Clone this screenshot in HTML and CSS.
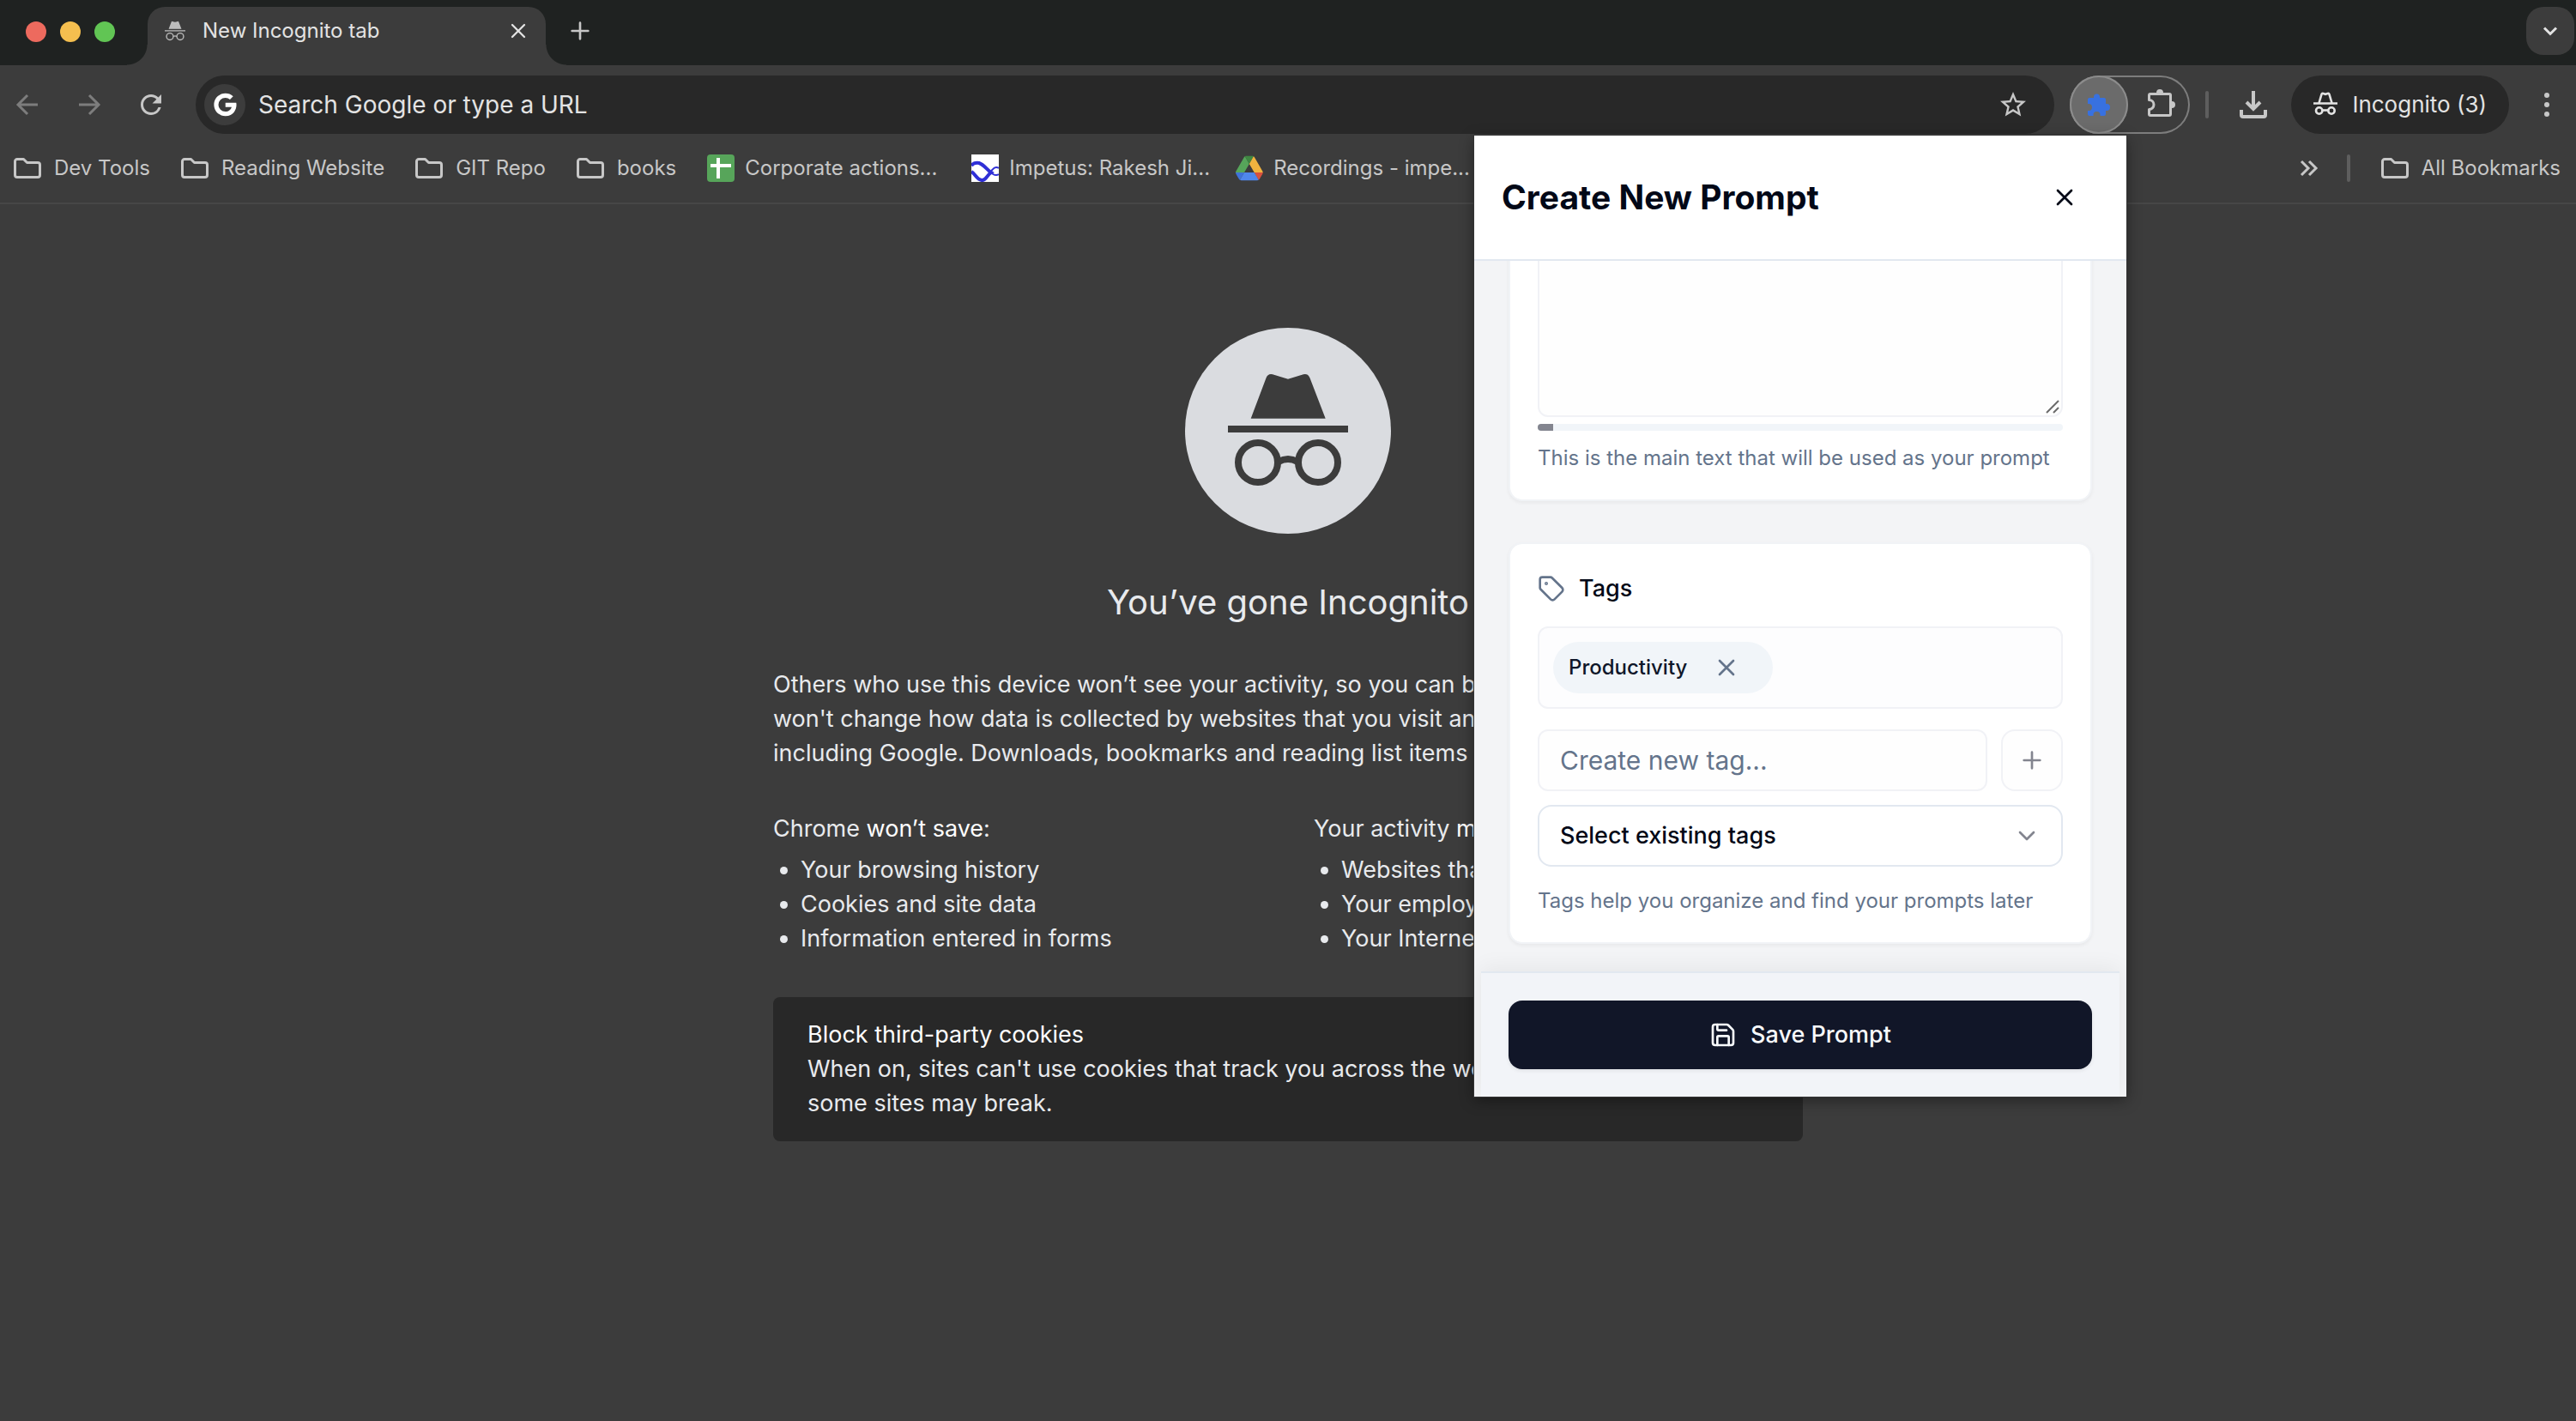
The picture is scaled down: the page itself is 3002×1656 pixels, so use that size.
FILE: index.html
```html
<!DOCTYPE html>
<html lang="en">
<head>
<meta charset="utf-8">
<title>New Incognito tab</title>
<link rel="stylesheet" href="styles.css">
</head>
<body>
<svg class="sprite" aria-hidden="true">
  <symbol id="spy" viewBox="50 49 140 140">
    <path fill="currentColor" d="M76.700 105.700 94.500 58.500Q96.500 53 102 54.200L120 59.700 138 54.200Q143.500 53 145.500 58.500L163.700 105.700ZM50 114H190V122H50Z"/>
    <g fill="none" stroke="currentColor" stroke-width="8"><circle cx="85" cy="157" r="23"/><circle cx="155" cy="157" r="23"/><path d="M109 156Q120 150 131 156"/></g>
  </symbol>
  <symbol id="folder" viewBox="0 0 32 24">
    <path fill="none" stroke="currentColor" stroke-width="3" stroke-linejoin="round" d="M4 1.500H11.500L15.500 5.500H28A2.500 2.500 0 0 1 30.500 8V20A2.500 2.500 0 0 1 28 22.500H4A2.500 2.500 0 0 1 1.500 20V4A2.500 2.500 0 0 1 4 1.500Z"/>
  </symbol>
  <symbol id="cross" viewBox="0 0 24 24">
    <path fill="none" stroke="currentColor" stroke-width="2" stroke-linecap="round" d="M18 6 6 18M6 6l12 12"/>
  </symbol>
  <symbol id="plus" viewBox="0 0 24 24">
    <path fill="none" stroke="currentColor" stroke-width="2" stroke-linecap="round" d="M5 12h14M12 5v14"/>
  </symbol>
  <symbol id="chevron" viewBox="0 0 24 24">
    <path fill="none" stroke="currentColor" stroke-width="2" stroke-linecap="round" stroke-linejoin="round" d="m6 9 6 6 6-6"/>
  </symbol>
</svg>

<header class="browser">
  <div class="tab-strip">
    <div class="lights"><span class="light red"></span><span class="light amber"></span><span class="light green"></span></div>
    <div class="tab">
      <svg class="favicon"><use href="#spy"/></svg>
      <span class="tab-title">New Incognito tab</span>
      <button class="icon-btn tab-close" aria-label="Close tab"><svg class="i28"><use href="#cross"/></svg></button>
    </div>
    <button class="icon-btn new-tab" aria-label="New tab"><svg class="i32"><use href="#plus"/></svg></button>
    <button class="icon-btn tab-search" aria-label="Search tabs"><svg class="i32" viewBox="0 0 32 32"><path fill="none" stroke="currentColor" stroke-width="3" d="m9 12.500 7 7 7-7"/></svg></button>
  </div>

  <div class="toolbar">
    <nav class="nav-btns">
      <button class="icon-btn nav-btn dim" aria-label="Back"><svg class="i32" viewBox="0 0 32 32"><path fill="none" stroke="currentColor" stroke-width="3" d="M28 16H6M16 5 5 16l11 11"/></svg></button>
      <button class="icon-btn nav-btn dim" aria-label="Forward"><svg class="i32" viewBox="0 0 32 32"><path fill="none" stroke="currentColor" stroke-width="3" d="M4 16h22M16 5l11 11-11 11"/></svg></button>
      <button class="icon-btn nav-btn" aria-label="Reload"><svg class="i36" viewBox="0 0 24 24"><path fill="currentColor" d="M17.650 6.350A7.958 7.958 0 0 0 12 4c-4.420 0-7.990 3.580-7.990 8s3.570 8 7.990 8c3.730 0 6.840-2.550 7.730-6h-2.080A5.990 5.990 0 0 1 12 18c-3.310 0-6-2.690-6-6s2.690-6 6-6c1.660 0 3.140.690 4.220 1.780L13 11h7V4l-2.350 2.350z"/></svg></button>
    </nav>
    <div class="omnibox">
      <span class="engine"><svg class="i32" viewBox="0 0 24 24"><path fill="#fff" d="M12.545 10.239v3.821h5.445c-.712 2.315-2.647 3.972-5.445 3.972a6.033 6.033 0 1 1 0-12.064c1.498 0 2.866.549 3.921 1.453l2.814-2.814A9.969 9.969 0 0 0 12.545 2C7.021 2 2.543 6.477 2.543 12s4.478 10 10.002 10c8.396 0 10.249-7.850 9.426-11.748l-9.426-.013z"/></svg></span>
      <input class="url" type="text" aria-label="Address bar" placeholder="Search Google or type a URL">
      <button class="icon-btn star" aria-label="Bookmark this tab"><svg class="i36" viewBox="0 0 24 24"><path fill="currentColor" d="M22 9.240l-7.190-.620L12 2 9.190 8.630 2 9.240l5.460 4.730L5.820 21 12 17.270 18.180 21l-1.630-7.030L22 9.240zM12 15.400l-3.760 2.270 1-4.280-3.320-2.880 4.380-.380L12 6.100l1.710 4.040 4.380.380-3.320 2.880 1 4.280L12 15.400z"/></svg></button>
    </div>
    <div class="extensions">
      <button class="icon-btn ext-active" aria-label="Prompt extension"><svg class="i32" viewBox="0 0 32 32"><path fill="#3871e0" d="M4 8H10V7A3.500 3.500 0 0 1 17 7V8H22Q24 8 24 10V15H25A4 4 0 0 1 25 23H24V27Q24 29 22 29H17.500V28A4 4 0 0 0 9.500 28V29H5Q3 29 3 27V23H4A4 4 0 0 0 4 15H3V10Q3 8 5 8Z"/></svg></button>
      <button class="icon-btn ext-menu" aria-label="Extensions"><svg class="i40" viewBox="0 0 40 40"><path fill="none" stroke="currentColor" stroke-width="3" stroke-linejoin="round" d="M7 7.500H29Q30.500 7.500 30.500 9V31Q30.500 32.500 29 32.500H7Q5.500 32.500 5.500 31V25.500A5.500 5.500 0 0 0 5.500 14.500V9Q5.500 7.500 7 7.500Z"/><path fill="currentColor" d="M14 7V6A4 4 0 0 1 22 6V7ZM31 16H32A4 4 0 0 1 32 24H31Z"/></svg></button>
    </div>
    <span class="divider"></span>
    <button class="icon-btn download" aria-label="Downloads"><svg class="i40" viewBox="0 0 40 40"><path fill="none" stroke="currentColor" stroke-width="4" d="M20 4V26M12 17l8 8 8-8M6 26V32Q6 34 8 34H32Q34 34 34 32V26"/></svg></button>
    <button class="profile"><svg class="i32" viewBox="0 0 32 32"><g fill="none" stroke="currentColor" stroke-width="2.600"><path d="M2 14.500H30M8.500 14 11.500 4Q12 2.500 13.500 3L16 3.800 18.500 3Q20 2.500 20.500 4L23.500 14"/><circle cx="8.700" cy="23" r="3.700"/><circle cx="23" cy="23" r="3.700"/><path d="M12 22.500H20"/></g></svg>Incognito (3)</button>
    <button class="icon-btn menu" aria-label="Menu"><svg class="i32" viewBox="0 0 32 32" fill="currentColor"><circle cx="16" cy="5" r="3"/><circle cx="16" cy="16" r="3"/><circle cx="16" cy="27" r="3"/></svg></button>
  </div>

  <nav class="bookmarks">
    <a class="bookmark" href="#"><svg class="folder"><use href="#folder"/></svg>Dev Tools</a>
    <a class="bookmark" href="#"><svg class="folder"><use href="#folder"/></svg>Reading Website</a>
    <a class="bookmark" href="#"><svg class="folder"><use href="#folder"/></svg>GIT Repo</a>
    <a class="bookmark" href="#"><svg class="folder"><use href="#folder"/></svg>books</a>
    <a class="bookmark site" href="#"><svg class="i32" viewBox="0 0 32 32"><rect width="32" height="32" rx="4" fill="#57a55a"/><path fill="#fff" d="M11 4h4v7h13v4H15v13h-4V15H4v-4h7z"/></svg><span class="site-name">Corporate actions...</span></a>
    <a class="bookmark site" href="#"><svg class="i32" viewBox="0 0 32 32"><path fill="#fff" d="M0 0h32v32H0z"/><path fill="none" stroke="#2f2fd6" stroke-width="4" d="M0 13Q3 9 9 10C15 12 18 18 23 21C18 24 17 31 12 30C6 29 5 23 0 20"/><path fill="none" stroke="#2f2fd6" stroke-width="2" d="M21 21C25 19 25 15 29 15Q31 15 32 16M22 20Q25 24 29 24Q31 24 32 23"/></svg><span class="site-name">Impetus: Rakesh Ji...</span></a>
    <a class="bookmark site" href="#"><svg class="i32" viewBox="0 -5 88 88"><path fill="#3f73d9" d="m6.600 66.850 3.850 6.650c.8 1.400 1.950 2.500 3.300 3.300l13.750-23.800h-27.500c0 1.550.4 3.100 1.200 4.500z"/><path fill="#56a55a" d="m43.650 25-13.750-23.800c-1.350.8-2.500 1.900-3.300 3.300l-25.400 44a9.060 9.060 0 0 0 -1.200 4.500h27.500z"/><path fill="#d8513f" d="m73.550 76.800c1.350-.8 2.500-1.900 3.300-3.300l1.600-2.750 7.650-13.250c.8-1.400 1.200-2.950 1.200-4.500h-27.500l5.850 11.500z"/><path fill="#3f8742" d="m43.650 25 13.750-23.800c-1.350-.8-2.900-1.200-4.500-1.200h-18.500c-1.600 0-3.150.45-4.500 1.200z"/><path fill="#5087ec" d="m59.800 53h-32.300l-13.750 23.800c1.350.8 2.900 1.200 4.500 1.200h50.800c1.600 0 3.150-.45 4.500-1.200z"/><path fill="#f1b33f" d="m73.400 26.500-12.700-22c-.8-1.400-1.950-2.500-3.300-3.300l-13.750 23.800 16.150 28h27.450c0-1.550-.4-3.100-1.200-4.500z"/></svg><span class="site-name">Recordings - impe...</span></a>
    <button class="icon-btn overflow" aria-label="More bookmarks"><svg class="i32" viewBox="0 0 32 32"><path fill="none" stroke="currentColor" stroke-width="3" d="m7 8 8 8-8 8M16 8l8 8-8 8"/></svg></button>
    <span class="divider"></span>
    <a class="bookmark" href="#"><svg class="folder"><use href="#folder"/></svg>All Bookmarks</a>
  </nav>
</header>

<main class="page">
  <div class="badge"><svg class="badge-art"><use href="#spy"/></svg></div>
  <h1 class="headline">You’ve gone Incognito</h1>
  <p class="intro">Others who use this device won’t see your activity, so you can browse more privately. This<br>won't change how data is collected by websites that you visit and the services they use,<br>including Google. Downloads, bookmarks and reading list items will be saved.</p>
  <div class="columns">
    <section>
      <p>Chrome <em>won’t save</em>:</p>
      <ul class="list"><li>Your browsing history</li><li>Cookies and site data</li><li>Information entered in forms</li></ul>
    </section>
    <section>
      <p>Your activity <em>might still be visible</em> to:</p>
      <ul class="list"><li>Websites that you visit</li><li>Your employer or school</li><li>Your Internet service provider</li></ul>
    </section>
  </div>
  <section class="cookies">
    <p><em>Block third-party cookies</em></p>
    <p>When on, sites can't use cookies that track you across the web. Features on<br>some sites may break.</p>
  </section>
</main>

<aside class="popup">
  <header class="popup-head">
    <h2 class="popup-title">Create New Prompt</h2>
    <button class="icon-btn popup-close" aria-label="Close"><svg class="i32"><use href="#cross"/></svg></button>
  </header>
  <div class="popup-body">
    <section class="card">
      <div class="prompt-field">
        <textarea class="prompt-text" aria-label="Prompt text"></textarea>
        <svg class="grip" viewBox="0 0 18 18"><path stroke="#6b6b6b" stroke-width="2" d="M2 16 16 2M10 16 16 10"/></svg>
      </div>
      <div class="meter" role="progressbar" aria-label="Prompt length" aria-valuenow="3"><span class="meter-fill" style="width:3%"></span></div>
      <p class="hint">This is the main text that will be used as your prompt</p>
    </section>
    <section class="card">
      <label class="card-title" for="new-tag"><svg class="i32 slate" viewBox="0 0 24 24" fill="none" stroke="currentColor" stroke-width="2" stroke-linejoin="round"><path d="M12.586 2.586A2 2 0 0 0 11.172 2H4a2 2 0 0 0-2 2v7.172a2 2 0 0 0 .586 1.414l8.704 8.704a2.426 2.426 0 0 0 3.420 0l6.580-6.580a2.426 2.426 0 0 0 0-3.420z"/><circle cx="7.500" cy="7.500" r=".5" fill="currentColor"/></svg>Tags</label>
      <div class="tag-box">
        <span class="chip">Productivity<button class="icon-btn chip-x" aria-label="Remove Productivity"><svg class="i32"><use href="#cross"/></svg></button></span>
      </div>
      <div class="tag-row">
        <input class="tag-input" id="new-tag" type="text" placeholder="Create new tag...">
        <button class="icon-btn add-tag" aria-label="Add tag"><svg class="i32"><use href="#plus"/></svg></button>
      </div>
      <div class="select-wrap">
        <select class="tag-select" aria-label="Existing tags"><option>Select existing tags</option></select>
        <svg class="i32 select-arrow"><use href="#chevron"/></svg>
      </div>
      <p class="hint tag-hint">Tags help you organize and find your prompts later</p>
    </section>
  </div>
  <footer class="popup-foot">
    <button class="save"><svg class="i32" viewBox="0 0 24 24" fill="none" stroke="currentColor" stroke-width="2" stroke-linecap="round" stroke-linejoin="round"><path d="M15.200 3a2 2 0 0 1 1.400.6l3.800 3.800a2 2 0 0 1 .6 1.400V19a2 2 0 0 1-2 2H5a2 2 0 0 1-2-2V5a2 2 0 0 1 2-2z"/><path d="M17 21v-7a1 1 0 0 0-1-1H8a1 1 0 0 0-1 1v7M7 3v4a1 1 0 0 0 1 1h7"/></svg>Save Prompt</button>
  </footer>
</aside>
</body>
</html>
```
FILE: styles.css
```css
*, *::before, *::after { box-sizing: border-box; }

body {
  margin: 0;
  position: relative;
  min-height: 100vh;
  background: #3c3c3c;
  color: #e8eaed;
  font: 400 27px/40px Inter, "Liberation Sans", sans-serif;
}

h1, h2, p, ul { margin: 0; }
button, input, textarea, select { font: inherit; color: inherit; margin: 0; border: 0; outline: 0; }
button { cursor: pointer; }
svg { display: block; flex: none; }

.sprite { display: none; }
.i28 { width: 28px; height: 28px; }
.i32 { width: 32px; height: 32px; }
.i36 { width: 36px; height: 36px; }
.i40 { width: 40px; height: 40px; }

.icon-btn {
  display: flex;
  align-items: center;
  justify-content: center;
  flex: none;
  padding: 0;
  background: none;
}

/* Tab strip */
.browser { color: #c7c7c7; border-bottom: 2px solid #474747; }
.tab-strip { display: flex; height: 76px; padding-right: 2px; background: #1f2221; }
.lights { display: flex; gap: 16px; padding: 25px 38px 0 30px; }
.light { width: 24px; height: 24px; border-radius: 50%; }
.red { background: #ed6a5e; }
.amber { background: #f5bf4f; }
.green { background: #61c554; }

.tab {
  position: relative;
  display: flex;
  align-items: center;
  width: 464px;
  margin-top: 8px;
  padding: 0 8px 12px 20px;
  border-radius: 20px 20px 0 0;
  background: #3c3c3c;
}
.tab::before, .tab::after {
  content: "";
  position: absolute;
  bottom: 0;
  width: 24px;
  height: 24px;
}
.tab::before { right: 100%; background: radial-gradient(circle at 0 0, #1f2221 23px, #3c3c3c 24px); }
.tab::after { left: 100%; background: radial-gradient(circle at 100% 0, #1f2221 23px, #3c3c3c 24px); }
.favicon { width: 24px; height: 24px; color: #bdbdbd; }
.tab-title { flex: 1; margin-left: 20px; font-size: 24px; line-height: 32px; color: #e3e3e3; }
.tab-close { width: 48px; height: 48px; color: #e3e3e3; }
.new-tab { width: 56px; height: 56px; margin: 8px 0 0 12px; }
.tab-search { width: 56px; height: 56px; margin: 8px 0 0 auto; border-radius: 20px; background: #3c3c3c; color: #e3e3e3; }

/* Toolbar */
.toolbar { display: flex; align-items: center; padding: 12px 2px 0 0; }
.nav-btns { display: flex; gap: 8px; }
.nav-btn { width: 64px; height: 64px; }
.dim { color: #7d7d7d; }
.omnibox {
  flex: 1;
  display: flex;
  align-items: center;
  height: 68px;
  margin: 0 18px 0 20px;
  padding: 0 24px 0 10px;
  border-radius: 34px;
  background: #282828;
}
.engine { display: flex; align-items: center; justify-content: center; width: 48px; height: 48px; border-radius: 50%; background: #3c3c3c; }
.url { flex: 1; padding: 0 15px; background: none; font-size: 28px; line-height: 40px; color: #e3e3e3; }
.url::placeholder { color: #e3e3e3; opacity: 1; }
.star { width: 48px; height: 48px; }
.extensions { display: flex; width: 140px; height: 68px; border-radius: 34px; box-shadow: inset 0 0 0 2px #7d7d7d; }
.ext-active { width: 68px; height: 68px; border-radius: 50%; background: #6b6b6b; box-shadow: inset 0 0 0 2px #8c8c8c; }
.ext-menu { flex: 1; height: 68px; padding-left: 6px; }
.divider { flex: none; width: 4px; height: 32px; border-radius: 2px; background: #5e5e5e; }
.toolbar .divider { margin-left: 18px; }
.download { width: 64px; height: 64px; margin: 0 12px 0 20px; }
.profile {
  display: flex;
  align-items: center;
  gap: 15px;
  height: 68px;
  padding: 0 26px 0 24px;
  border-radius: 34px;
  background: #282828;
  color: #e3e3e3;
  font-size: 26px;
}
.menu { width: 64px; height: 64px; margin-left: 12px; }

/* Bookmarks bar */
.bookmarks { display: flex; align-items: center; gap: 36px; height: 80px; padding: 0 18px 0 16px; font-size: 24px; line-height: 32px; white-space: nowrap; }
.bookmark { display: flex; align-items: center; gap: 15px; flex: none; color: inherit; text-decoration: none; }
.site { gap: 12px; }
.site-name { width: 228px; }
.folder { width: 32px; height: 24px; }
.overflow { width: 32px; height: 32px; margin: 0 -8px 0 auto; }

/* New tab page */
.page { display: flex; flex-direction: column; width: 1200px; max-width: 100%; margin: 0 auto; padding: 144px 0 48px; }
.badge {
  align-self: center;
  display: flex;
  justify-content: center;
  width: 240px;
  height: 240px;
  padding-top: 49px;
  border-radius: 50%;
  background: #dadce0;
  color: #3c3c3c;
}
.badge-art { width: 140px; height: 140px; }
.headline { margin-top: 56px; font-size: 40px; line-height: 48px; font-weight: 400; text-align: center; }
.intro { margin-top: 52px; white-space: nowrap; }
.columns { display: grid; grid-template-columns: 1fr 1fr; gap: 60px; margin-top: 48px; }
em { font-style: normal; color: #fff; }
.list { margin-top: 8px; padding-left: 32px; }
.cookies { margin-top: 48px; padding: 24px 40px; border-radius: 8px; background: #282828; }

/* Extension popup */
.popup {
  position: absolute;
  top: 158px;
  right: 524px;
  width: 760px;
  overflow: hidden;
  background: #f3f4f6;
  color: #020817;
  box-shadow: 0 0 0 1px #333, 0 4px 16px rgba(0, 0, 0, .4);
}
.popup-head {
  display: flex;
  align-items: center;
  justify-content: space-between;
  height: 146px;
  padding: 0 40px 0 32px;
  border-bottom: 2px solid #e2e8f0;
  background: #fff;
}
.popup-title { font-size: 39px; line-height: 48px; font-weight: 700; }
.popup-close { width: 64px; height: 64px; }
.popup-body {
  display: flex;
  flex-direction: column;
  justify-content: flex-end;
  gap: 48px;
  max-height: 828px;
  overflow: hidden;
  padding: 0 40px 32px;
}
.card {
  flex: none;
  display: flex;
  flex-direction: column;
  padding: 32px;
  border: 2px solid #f1f3f6;
  border-radius: 16px;
  background: #fff;
  background-clip: padding-box;
  box-shadow: 0 2px 4px rgba(0, 0, 0, .05);
}
.prompt-field { position: relative; }
.prompt-text { display: block; width: 100%; height: 256px; padding: 16px 24px; resize: none; border: 2px solid #f1f2f6; border-radius: 12px; background: #fefefe; }
.grip { position: absolute; right: 3px; bottom: 3px; width: 18px; height: 18px; }
.meter { height: 8px; margin: 8px 0 16px; overflow: hidden; border-radius: 4px; background: #f1f5f9; }
.meter-fill { display: block; height: 100%; background: #83858f; }
.hint { font-size: 24px; line-height: 32px; color: #64748b; white-space: nowrap; }
.card-title { display: flex; align-items: center; gap: 16px; font-weight: 500; }
.slate { color: #64748b; }
.tag-box { display: flex; margin: 24px 0; padding: 16px; border: 2px solid #f1f2f6; border-radius: 12px; background: #fdfdfe; }
.chip { display: flex; align-items: center; gap: 16px; height: 60px; padding: 0 24px 0 18px; border-radius: 30px; background: #f1f5f9; color: #0f172a; font-size: 24px; font-weight: 500; }
.chip-x { width: 60px; height: 60px; color: #64748b; }
.tag-row { display: flex; gap: 16px; }
.tag-input { flex: 1; min-width: 0; height: 72px; padding: 0 24px; border: 2px solid #f1f2f6; border-radius: 12px; background: #fefefe; font-size: 30px; }
.tag-input::placeholder { color: #64748b; opacity: 1; }
.add-tag { width: 72px; height: 72px; border: 2px solid #f1f2f6; border-radius: 16px; background: #fefefe; color: #83858f; }
.select-wrap { display: grid; align-items: center; margin-top: 16px; }
.tag-select { grid-area: 1 / 1; height: 72px; padding: 0 24px; appearance: none; border: 2px solid #e2e8f0; border-radius: 16px; background: #fff; font-weight: 500; }
.select-arrow { grid-area: 1 / 1; justify-self: end; margin-right: 26px; color: #83858f; pointer-events: none; }
.tag-hint { margin-top: 24px; }
.popup-foot {
  position: relative;
  margin: 0 8px;
  padding: 32px;
  border-top: 2px solid #e2e8f0;
  background: #f2f4f8;
  box-shadow: 0 -4px 24px rgba(0, 0, 0, .06);
}
.save {
  display: flex;
  align-items: center;
  justify-content: center;
  gap: 16px;
  width: 100%;
  height: 80px;
  border-radius: 16px;
  background: #111628;
  color: #f8fafc;
  font-weight: 500;
  box-shadow: 0 2px 4px rgba(0, 0, 0, .08);
}
```
